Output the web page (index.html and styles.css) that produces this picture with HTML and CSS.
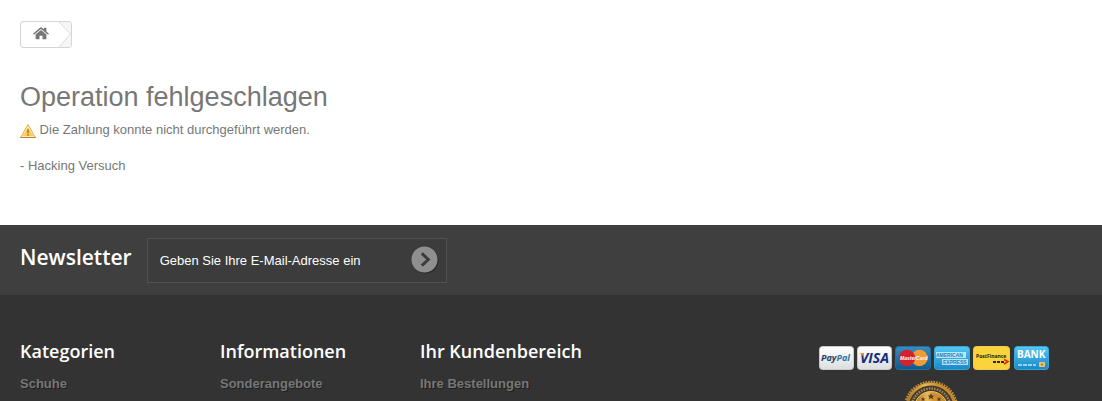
FILE: index.html
```html
<!DOCTYPE html>
<html lang="de">
  <head>
    <meta charset="UTF-8" />
    <meta name="viewport" content="width=device-width, initial-scale=1.0" />
    <title>Operation fehlgeschlagen</title>
    <link rel="stylesheet" href="styles.css">
  </head>
  <body>
    <main class="content">
      <nav class="breadcrumb">
        <a class="home" href="#" aria-label="Home">
          <svg width="16" height="14" viewBox="0 0 16 14">
            <path fill="#777" d="M8 3 13.4 7.6V11.6Q13.4 12.3 12.7 12.3H9.5V8.8H6.5V12.3H3.3Q2.6 12.3 2.6 11.6V7.6Z" />
            <path fill="#777" d="M8.7 .4 11 2.3V.7H13.4V4.4L16 6.7 15 7.8 8 2 1 7.8 0 6.7 7.3 .4Q8 -.1 8.7 .4Z" />
          </svg>
        </a>
        <svg class="arrow" width="14" height="25" viewBox="0 0 14 25">
          <path fill="#f6f6f6" d="M2 0 13.5 12 2 25H14V0Z" />
          <path fill="none" stroke="#dddcdc" d="M2 0 13.5 12 2 25" />
        </svg>
      </nav>
      <h1>Operation fehlgeschlagen</h1>
      <p class="error">
        <svg class="warning" width="16" height="16" viewBox="0 0 16 16">
          <path fill="#fff3d0" stroke="#e5a848" stroke-linejoin="round" d="M8 1.5 15.4 14.5H.6Z" />
          <path fill="#f9ce55" d="M8 4 13.5 13.3H2.5Z" />
          <path stroke="#c07a3e" d="M.5 14.5H15.5" />
          <path stroke="#a87a24" stroke-width="1.6" d="M8 6.5V10.3M8 11.3V12.7" />
        </svg>
        Die Zahlung konnte nicht durchgeführt werden.
      </p>
      <p>- Hacking Versuch</p>
    </main>

    <section class="newsletter">
      <label for="email">Newsletter</label>
      <form class="newsletter-form">
        <input type="text" id="email" value="Geben Sie Ihre E-Mail-Adresse ein" />
        <button type="button" aria-label="OK">
          <svg width="28" height="28" viewBox="0 0 28 28">
            <circle cx="14.5" cy="14.5" r="13" fill="#292929" />
            <circle cx="13.5" cy="13.5" r="13" fill="#908f8f" />
            <path fill="none" stroke="#3c3c3c" stroke-width="3" d="M10.8 7.3 17.3 13.5 10.8 19.7" />
          </svg>
        </button>
      </form>
    </section>

    <footer class="footer">
      <div class="footer-col">
        <h4>Kategorien</h4>
        <a href="#">Schuhe</a>
      </div>
      <div class="footer-col">
        <h4>Informationen</h4>
        <a href="#">Sonderangebote</a>
      </div>
      <div class="footer-col">
        <h4>Ihr Kundenbereich</h4>
        <a href="#">Ihre Bestellungen</a>
      </div>
      <div class="payment">
        <div class="cards">
          <!-- PayPal -->
          <svg width="35" height="24" viewBox="0 0 35 24">
            <defs>
              <linearGradient id="silver" x2="0" y2="1">
                <stop offset="0" stop-color="#fff" />
                <stop offset="1" stop-color="#dcdddf" />
              </linearGradient>
              <linearGradient id="blue" x2="0" y2="1">
                <stop offset="0" stop-color="#55c8f2" />
                <stop offset="1" stop-color="#1689c8" />
              </linearGradient>
              <linearGradient id="navy" x2="0" y2="1">
                <stop offset="0" stop-color="#388dc0" />
                <stop offset="1" stop-color="#11588b" />
              </linearGradient>
            </defs>
            <rect x=".5" y=".5" width="34" height="23" rx="3" fill="url(#silver)" stroke="#c9cacc" />
            <text class="paypal" x="2" y="15" fill="#223f67">Pay<tspan fill="#2f74a5">Pal</tspan></text>
          </svg>
          <!-- Visa -->
          <svg width="35" height="24" viewBox="0 0 35 24">
            <rect x=".5" y=".5" width="34" height="23" rx="3" fill="url(#silver)" stroke="#c9cacc" />
            <text class="visa" x="3" y="17" fill="#142d78">VISA</text>
            <path fill="#e79a2b" d="M2.5 7H6L7.4 12Q5.4 8.4 2.5 7Z" />
          </svg>
          <!-- MasterCard -->
          <svg width="36" height="24" viewBox="0 0 36 24">
            <rect x=".5" y=".5" width="35" height="23" rx="3" fill="url(#navy)" stroke="#246f9e" />
            <circle cx="24.5" cy="12" r="8.2" fill="#f19b35" />
            <circle cx="12" cy="12" r="8.2" fill="#d5202e" />
            <text class="mastercard" x="5" y="14" fill="#fff">MasterCard</text>
          </svg>
          <!-- American Express -->
          <svg width="36" height="24" viewBox="0 0 36 24">
            <rect x=".5" y=".5" width="35" height="23" rx="3" fill="url(#blue)" stroke="#36a9da" />
            <path fill="#e8f7fd" d="M2 6H32V12H2ZM8 13H34V19H8Z" opacity=".75" />
            <text class="amex" x="2" y="11" fill="#1684bd">AMERICAN</text>
            <text class="amex" x="9" y="18" fill="#1684bd">EXPRESS</text>
          </svg>
          <!-- PostFinance -->
          <svg width="38" height="24" viewBox="0 0 38 24">
            <rect x=".5" y=".5" width="36" height="23" rx="3" fill="#fbd43c" stroke="#efc85a" />
            <text class="postfinance" x="3" y="12" fill="#211d10">PostFinance</text>
            <path stroke="#2c2410" stroke-width="2" stroke-dasharray="3 1" d="M20 16H31" />
            <path fill="none" stroke="#dc2418" stroke-width="1.5" d="M31 13.5 35 15.5 31 18" />
          </svg>
          <!-- Bank -->
          <svg width="35" height="24" viewBox="0 0 35 24">
            <rect x=".5" y=".5" width="34" height="23" rx="3" fill="url(#blue)" stroke="#36a9da" />
            <text class="bank" x="3" y="12" fill="#fff">BANK</text>
            <path stroke="#bfe6f7" stroke-width="1.5" stroke-dasharray="4 1" d="M4 19H22" />
            <rect x="25" y="16" width="6" height="5" rx="1" fill="#f1c26a" />
            <circle cx="28" cy="18.5" r="1" fill="#9a6b25" />
          </svg>
        </div>
        <svg class="seal" width="56" height="56" viewBox="0 0 56 56">
          <defs>
            <linearGradient id="gold">
              <stop offset="0" stop-color="#a8701c" />
              <stop offset=".4" stop-color="#e8b95c" />
              <stop offset=".6" stop-color="#cf9233" />
              <stop offset="1" stop-color="#bd8530" />
            </linearGradient>
          </defs>
          <circle cx="28" cy="28" r="25.5" fill="url(#gold)" />
          <circle cx="28" cy="28" r="26" fill="none" stroke="#c28b37" stroke-width="2.5" stroke-dasharray="1.7 1" />
          <circle cx="28" cy="28" r="19.5" fill="none" stroke="#453a29" stroke-width="6" />
          <circle cx="28" cy="28" r="19.5" fill="none" stroke="#a28a56" stroke-width="2.5" stroke-dasharray="1.5 1.2" />
          <circle cx="28" cy="28" r="16.5" fill="url(#gold)" stroke="#edbd62" />
          <path fill="#553c17" d="M28 13 29 15.5H31.5L29.5 17 30.3 19.5 28 18 25.7 19.5 26.5 17 24.5 15.5H27ZM20 17 20.7 18.5H22.3L21 19.6 21.5 21.2 20 20.2 18.5 21.2 19 19.6 17.7 18.5H19.3ZM36 17 36.7 18.5H38.3L37 19.6 37.5 21.2 36 20.2 34.5 21.2 35 19.6 33.7 18.5H35.3Z" />
        </svg>
      </div>
    </footer>
  </body>
</html>
```
FILE: styles.css
```css
* {
  box-sizing: border-box;
}
body {
  display: flex;
  flex-direction: column;
  height: 100vh;
  margin: 0;
  overflow: hidden;
  background-color: #fff;
  color: #777;
  font: 13px/18px "Liberation Sans", Arial, sans-serif;
}
h1, h4, p {
  margin: 0;
}
.content {
  padding: 21px 20px 50px;
}
.breadcrumb {
  display: flex;
  width: fit-content;
  border: 1px solid #d6d4d4;
  border-radius: 3px;
  overflow: hidden;
}
.home {
  display: flex;
  padding: 5px 8px 6px 12px;
}
.breadcrumb svg {
  display: block;
}
h1 {
  margin-top: 31px;
  font-size: 27px;
  line-height: 36px;
  font-weight: normal;
}
.error {
  margin: 6px 0 18px;
}
.warning {
  vertical-align: -5px;
}
.newsletter {
  display: flex;
  gap: 15px;
  padding: 13px 20px 12px;
  background-color: #3f3f3f;
}
.newsletter label {
  color: #fff;
  font: 600 21px/38px "Open Sans", sans-serif;
}
.newsletter-form {
  display: flex;
  width: 300px;
  height: 45px;
  border: 1px solid #515151;
  background-color: #3c3c3c;
}
.newsletter-form input {
  flex: 1;
  min-width: 0;
  padding: 0 12px;
  border: none;
  background: none;
  color: #fff;
  font: inherit;
}
.newsletter-form button {
  display: flex;
  padding: 7px 7px 0 0;
  border: none;
  background: none;
}
.footer {
  display: flex;
  flex: 1;
  min-height: 0;
  padding: 43px 53px 0 20px;
  overflow: hidden;
  background-color: #333;
}
.footer-col {
  width: 200px;
}
.footer-col h4 {
  margin-bottom: 11px;
  color: #fff;
  font: 600 18px/26px "Open Sans", sans-serif;
}
.footer-col a {
  color: #777;
  font-weight: bold;
  text-decoration: none;
  text-shadow: 1px 1px 0 #1f1f1f;
}
.payment {
  margin-left: auto;
  padding-top: 8px;
}
.cards {
  display: flex;
  gap: 3px;
}
.seal {
  display: block;
  margin: 10px 0 0 84px;
}
.paypal {
  font: italic bold 9px "Open Sans", sans-serif;
}
.visa {
  font: italic bold 14px "Open Sans", sans-serif;
}
.mastercard {
  font: italic bold 5px "Liberation Sans", sans-serif;
}
.amex {
  font: bold 5px "Liberation Sans", sans-serif;
}
.postfinance {
  font: bold 5px "Open Sans", sans-serif;
}
.bank {
  font: bold 10px "Open Sans", sans-serif;
}
```
